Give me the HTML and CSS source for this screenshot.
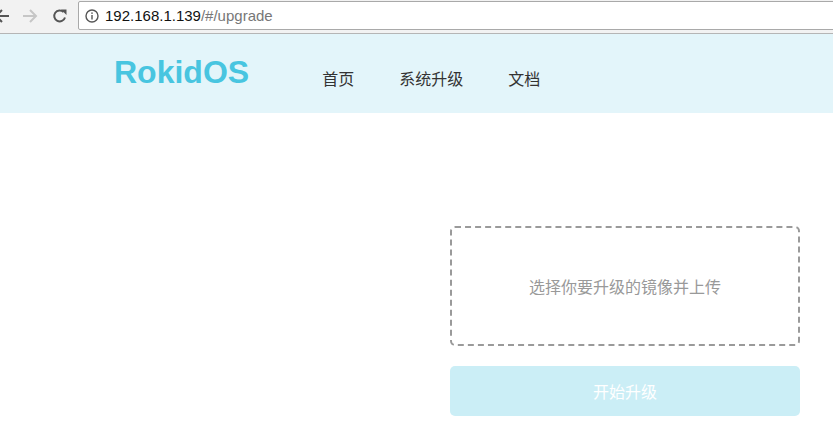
FILE: index.html
```html
<!doctype html>
<html lang="zh-CN">
  <head>
    <meta charset="UTF-8" />
    <meta name="viewport" content="width=device-width, initial-scale=1.0" />
    <title>RokidOS</title>
    <link rel="stylesheet" href="styles.css">
  </head>
  <body>
    <!-- Browser toolbar -->
    <div class="toolbar">
      <span class="tool-btn back">
        <svg width="16" height="16" viewBox="0 0 16 16"><path d="M15 8H2M8 2L2 8l6 6" fill="none" stroke="#555" stroke-width="2"/></svg>
      </span>
      <span class="tool-btn forward">
        <svg width="16" height="16" viewBox="0 0 16 16"><path d="M1 8h13M8 2l6 6-6 6" fill="none" stroke="#c6c6c6" stroke-width="2"/></svg>
      </span>
      <span class="tool-btn reload">
        <svg width="16" height="16" viewBox="0 0 16 16"><path d="M13 9.5A5.5 5.5 0 1 1 11.6 4" fill="none" stroke="#555" stroke-width="2"/><path d="M9 1.5h5.5V7z" fill="#555"/></svg>
      </span>
      <div class="url-box">
        <svg class="info-icon" width="14" height="14" viewBox="0 0 14 14"><circle cx="7" cy="7" r="6" fill="none" stroke="#555" stroke-width="1.4"/><rect x="6.3" y="6" width="1.4" height="4.5" fill="#555"/><rect x="6.3" y="3.4" width="1.4" height="1.5" fill="#555"/></svg>
        <span class="url-host">192.168.1.139</span><span class="url-path">/#/upgrade</span>
      </div>
    </div>

    <!-- Site header -->
    <header class="header">
      <a class="logo" href="#">RokidOS</a>
      <nav class="nav-links">
        <a href="#/">首页</a>
        <a href="#/upgrade">系统升级</a>
        <a href="#/docs">文档</a>
      </nav>
    </header>

    <main class="main-content">
      <div class="upgrade-panel">
        <label class="drop-zone">
          选择你要升级的镜像并上传
          <input type="file" class="file-input" />
        </label>
        <button class="start-btn" disabled>开始升级</button>
      </div>
    </main>
  </body>
</html>
```

FILE: styles.css
```css
/* Reset and general styles */
* {
  margin: 0;
  padding: 0;
  box-sizing: border-box;
}

body {
  background-color: #fff;
  font-family: "Liberation Sans", "Noto Sans CJK SC", sans-serif;
  overflow: hidden;
}

/* Browser toolbar */
.toolbar {
  height: 34px;
  background-color: #f2f2f2;
  border-bottom: 1px solid #b5b5b5;
  display: flex;
  align-items: flex-start;
  padding-top: 1px;
}

.tool-btn {
  width: 16px;
  height: 16px;
  margin-top: 7px;
  display: flex;
}

.back {
  margin-left: -6px;
}

.forward {
  margin-left: 12px;
}

.reload {
  margin-left: 14px;
}

.url-box {
  margin-left: 10px;
  flex: 1;
  height: 29px;
  margin-right: -10px;
  background-color: #fff;
  border: 1px solid #a9a9a9;
  border-radius: 2px;
  display: flex;
  align-items: center;
  padding-left: 6px;
  font-size: 15px;
}

.info-icon {
  margin-right: 6px;
}

.url-host {
  color: #111;
}

.url-path {
  color: #777;
}

/* Header */
.header {
  height: 79px;
  background-color: #e3f5fa;
  display: flex;
  align-items: center;
  padding-left: 114px;
}

.logo {
  font-size: 32px;
  font-weight: bold;
  color: #48c5e0;
  text-decoration: none;
  margin-right: 73px;
  margin-top: -2px;
}

.nav-links {
  display: flex;
  gap: 45px;
  margin-top: 8px;
}

.nav-links a {
  font-size: 16px;
  color: #333;
  text-decoration: none;
}

/* Upgrade panel */
.main-content {
  display: flex;
  justify-content: flex-end;
  padding: 113px 33px 0 0;
}

.upgrade-panel {
  width: 350px;
  display: flex;
  flex-direction: column;
  gap: 20px;
}

.drop-zone {
  height: 120px;
  border: 2px dashed #9a9a9a;
  border-radius: 5px;
  display: flex;
  align-items: center;
  justify-content: center;
  font-size: 16px;
  color: #999;
  cursor: pointer;
}

.file-input {
  display: none;
}

.start-btn {
  height: 50px;
  border: none;
  border-radius: 5px;
  background-color: #cbeef6;
  color: #fff;
  font-size: 16px;
  font-family: inherit;
}
```
